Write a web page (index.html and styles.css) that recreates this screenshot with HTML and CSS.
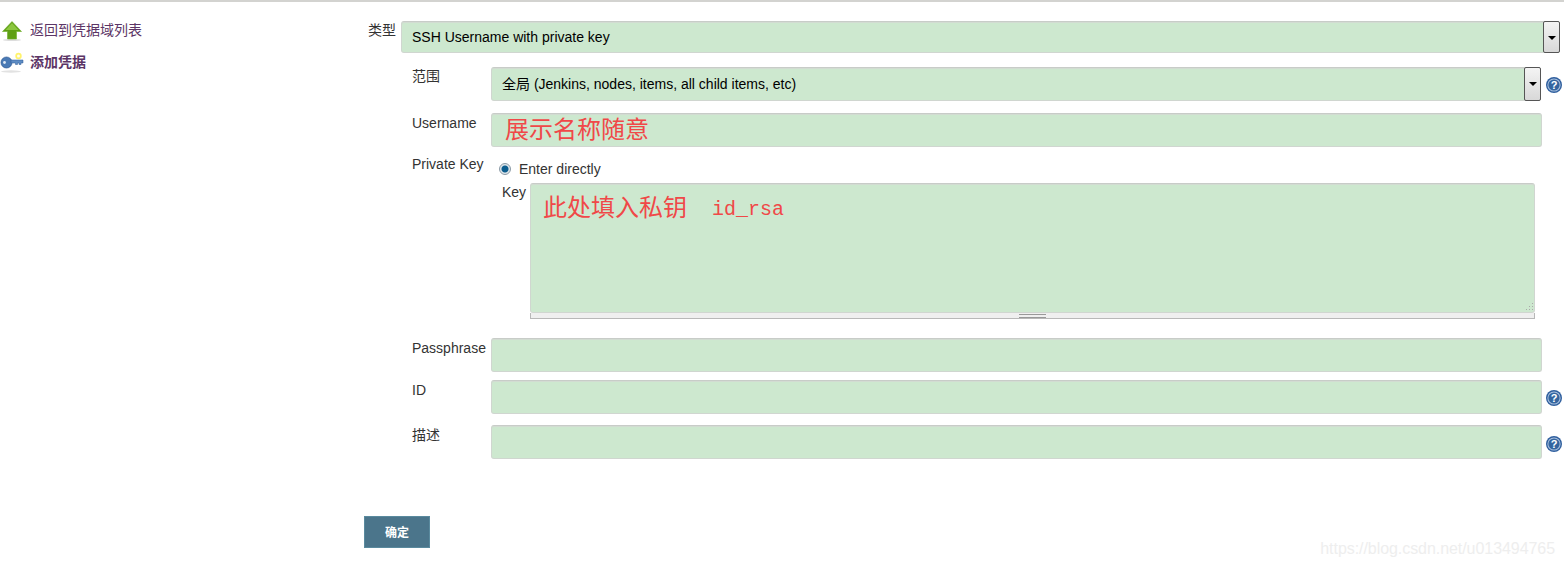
FILE: index.html
```html
<!DOCTYPE html>
<html lang="zh-CN">
<head>
  <meta charset="UTF-8" />
  <title>添加凭据</title>
  <link rel="stylesheet" href="styles.css">
</head>
<body>
  <div class="page">
    <div class="side">
      <a class="side-item" href="#">
        <svg class="side-icon" width="24" height="24" viewBox="0 0 24 24">
          <ellipse cx="12" cy="23" rx="9" ry="1" fill="#ddd"/>
          <path d="M12 4.5 L21.5 14.5 L16.5 14.5 L16.5 22 L7.5 22 L7.5 14.5 L2.5 14.5 Z" fill="#5f9f14" stroke="#6fae2a" stroke-width="0.6"/>
          <path d="M12 6 L18.5 13 L5.5 13 Z" fill="#8cc63f"/>
        </svg>
        返回到凭据域列表
      </a>
      <a class="side-item side-bold" href="#">
        <svg class="side-icon" width="24" height="24" viewBox="0 0 24 24">
          <ellipse cx="11" cy="22.5" rx="10" ry="1.2" fill="#e2e2e2"/>
          <circle cx="18.5" cy="7" r="3.2" fill="#fff36b"/>
          <circle cx="18.5" cy="7" r="1.5" fill="#fffdf0"/>
          <circle cx="6.5" cy="13.5" r="5.5" fill="#4a7ab5" stroke="#2f5a94" stroke-width="0.7"/>
          <circle cx="4.5" cy="13.5" r="1.4" fill="#dfe9f5"/>
          <path d="M11 11 H23 V14 H21 V15.5 H19 V14 H17.5 V15.5 H15.5 V14 H11 Z" fill="#5d8cc4" stroke="#2f5a94" stroke-width="0.5"/>
        </svg>
        添加凭据
      </a>
    </div>

    <form class="main">
      <div class="row-type">
        <label class="label-type">类型</label>
        <div class="select-box">
          <select class="field">
            <option>SSH Username with private key</option>
          </select>
          <span class="select-arrow"></span>
        </div>
      </div>

      <div class="row row-scope">
        <label>范围</label>
        <div class="select-box">
          <select class="field">
            <option>全局 (Jenkins, nodes, items, all child items, etc)</option>
          </select>
          <span class="select-arrow"></span>
        </div>
        <svg class="help" width="16" height="16" viewBox="0 0 16 16">
          <circle cx="8" cy="8" r="8" fill="#2f5f9e"/>
          <circle cx="8" cy="8" r="6.6" fill="#a9c0de"/>
          <circle cx="8" cy="8" r="5.6" fill="#34659f"/>
          <text x="8" y="12.3" text-anchor="middle" class="help-mark">?</text>
        </svg>
      </div>

      <div class="row row-user">
        <label>Username</label>
        <input class="field field-note" type="text" value="展示名称随意">
      </div>

      <div class="row row-key">
        <label>Private Key</label>
        <div class="key-block">
          <label class="radio-line"><span class="radio"></span>Enter directly</label>
          <div class="key-line">
            <span class="key-label">Key</span>
            <div class="key-wrap">
              <div class="area-box">
                <textarea class="area" spellcheck="false"></textarea>
                <span class="area-note">此处填入私钥<span class="note-latin">id_rsa</span></span>
                <svg class="grip" width="9" height="9" viewBox="0 0 9 9" fill="#aaa">
                  <rect x="7" y="1" width="1" height="1"/>
                  <rect x="7" y="4" width="1" height="1"/>
                  <rect x="4" y="4" width="1" height="1"/>
                  <rect x="7" y="7" width="1" height="1"/>
                  <rect x="4" y="7" width="1" height="1"/>
                  <rect x="1" y="7" width="1" height="1"/>
                </svg>
              </div>
              <div class="drag-bar"><span class="drag-lines"></span></div>
            </div>
          </div>
        </div>
      </div>

      <div class="row row-pass">
        <label>Passphrase</label>
        <input class="field" type="text">
      </div>

      <div class="row row-id">
        <label>ID</label>
        <input class="field" type="text">
        <svg class="help" width="16" height="16" viewBox="0 0 16 16">
          <circle cx="8" cy="8" r="8" fill="#2f5f9e"/>
          <circle cx="8" cy="8" r="6.6" fill="#a9c0de"/>
          <circle cx="8" cy="8" r="5.6" fill="#34659f"/>
          <text x="8" y="12.3" text-anchor="middle" class="help-mark">?</text>
        </svg>
      </div>

      <div class="row row-desc">
        <label>描述</label>
        <input class="field" type="text">
        <svg class="help" width="16" height="16" viewBox="0 0 16 16">
          <circle cx="8" cy="8" r="8" fill="#2f5f9e"/>
          <circle cx="8" cy="8" r="6.6" fill="#a9c0de"/>
          <circle cx="8" cy="8" r="5.6" fill="#34659f"/>
          <text x="8" y="12.3" text-anchor="middle" class="help-mark">?</text>
        </svg>
      </div>

      <button class="ok" type="button">确定</button>
    </form>
  </div>

  <div class="watermark">https://blog.csdn.net/u013494765</div>
</body>
</html>
```

FILE: styles.css
```css
* {
  box-sizing: border-box;
}

body {
  margin: 0;
  height: 567px;
  overflow: hidden;
  background: white;
  color: #333;
  font-family: "Liberation Sans", "Noto Sans CJK SC", sans-serif;
  font-size: 14px;
  border-top: 2px solid #d3d3d0;
  position: relative;
}

.page {
  display: flex;
}

.side {
  flex: 0 0 364px;
  padding-top: 15px;
  display: flex;
  flex-direction: column;
  gap: 8px;
}

.side-item {
  display: flex;
  align-items: center;
  gap: 6px;
  height: 24px;
  color: #5c3566;
  text-decoration: none;
}

.side-bold {
  font-weight: bold;
}

.side-icon {
  flex: none;
}

.main {
  flex: 1;
  padding-top: 19px;
}

.row-type {
  display: flex;
  padding-right: 4px;
}

.label-type {
  flex: 0 0 37px;
  padding: 0 0 0 4px;
  line-height: 18px;
}

.select-box {
  position: relative;
  flex: 1;
  height: 100%;
  display: flex;
}

.row-type .select-box {
  height: 32px;
}

.field {
  display: block;
  width: 100%;
  flex: 1;
  min-width: 0;
  height: 34px;
  background: #cde8cf;
  border: 1px solid #d0d6d0;
  border-top-color: #c8ccc8;
  border-radius: 3px;
  box-shadow: inset 0 1px 0 #d2dcd2;
  color: #000;
  font-family: inherit;
  font-size: 14px;
  padding: 0 10px;
  margin: 0;
  outline: none;
  appearance: none;
}

.row-type .field {
  height: 32px;
}

.select-arrow {
  position: absolute;
  right: 0;
  top: 0;
  bottom: 0;
  width: 17px;
  background: linear-gradient(to bottom, #f4f4f4, #d8d8d8);
  border: 1px solid #555;
  border-radius: 2px;
}

.select-arrow::after {
  content: "";
  position: absolute;
  left: 4px;
  top: 14px;
  border-left: 4px solid transparent;
  border-right: 4px solid transparent;
  border-top: 4px solid #000;
}

.row {
  display: grid;
  grid-template-columns: 79px 1051px 22px;
  align-items: start;
  padding-left: 48px;
}

.row > label {
  line-height: 18px;
  padding-top: 1px;
}

.row-scope {
  margin-top: 14px;
}

.row-scope .select-box {
  margin-right: 1px;
}

.row-scope > label,
.row-key > label {
  padding-top: 0;
}

.row-user {
  margin-top: 12px;
}

.row-key {
  margin-top: 8px;
}

.row-pass {
  margin-top: 19px;
}

.row-id {
  margin-top: 8px;
}

.row-desc {
  margin-top: 11px;
}

.help {
  margin: 10px 0 0 4px;
}

.row-desc .help {
  margin-top: 11px;
}

.help-mark {
  font-family: "Liberation Sans", sans-serif;
  font-size: 11px;
  font-weight: bold;
  fill: white;
}

.field-note {
  color: #f04848;
  font-size: 24px;
  padding: 0 0 6px 13px;
}

.key-block {
  grid-column: 2 / 4;
  margin-top: 5px;
  margin-left: -1px;
}

.radio-line {
  display: flex;
  align-items: center;
  height: 18px;
  padding-left: 9px;
  gap: 8px;
}

.radio {
  width: 12px;
  height: 12px;
  border-radius: 50%;
  background: radial-gradient(circle, #0c5d8e 0 3px, #dfe6ea 4px);
  border: 1px solid #8a99a5;
}

.key-line {
  display: flex;
  margin-top: 5px;
}

.key-label {
  flex: 0 0 40px;
  padding: 0 0 0 12px;
  line-height: 18px;
}

.key-wrap {
  width: 1005px;
}

.area-box {
  position: relative;
  height: 130px;
}

.area {
  display: block;
  width: 100%;
  height: 100%;
  background: #cde8cf;
  border: 1px solid #d0d6d0;
  border-top-color: #c8ccc8;
  border-radius: 3px;
  box-shadow: inset 0 1px 0 #d2dcd2;
  resize: none;
  outline: none;
}

.area-note {
  position: absolute;
  left: 13px;
  top: 9px;
  color: #f04848;
  font-size: 24px;
  line-height: 32px;
  pointer-events: none;
}

.note-latin {
  font-family: "Liberation Mono", monospace;
  font-size: 20px;
  margin-left: 25px;
  vertical-align: 1px;
}

.grip {
  position: absolute;
  right: 1px;
  bottom: 2px;
}

.drag-bar {
  height: 6px;
  background: #efefef;
  border: 1px solid #b8b8b8;
  border-top: none;
  display: flex;
  justify-content: center;
}

.drag-lines {
  width: 27px;
  height: 4px;
  border-top: 1px solid #999;
  border-bottom: 1px solid #999;
  margin-top: 1px;
}

.ok {
  display: block;
  margin-top: 57px;
  width: 66px;
  height: 32px;
  background: #4b758b;
  border: 1px solid #5a8a9e;
  color: white;
  font-family: inherit;
  font-size: 12px;
  font-weight: bold;
  padding: 0 0 2px;
}

.watermark {
  position: absolute;
  right: 9px;
  top: 538px;
  color: #eee;
  font-size: 16px;
  line-height: 18px;
  letter-spacing: -0.06px;
}
```
